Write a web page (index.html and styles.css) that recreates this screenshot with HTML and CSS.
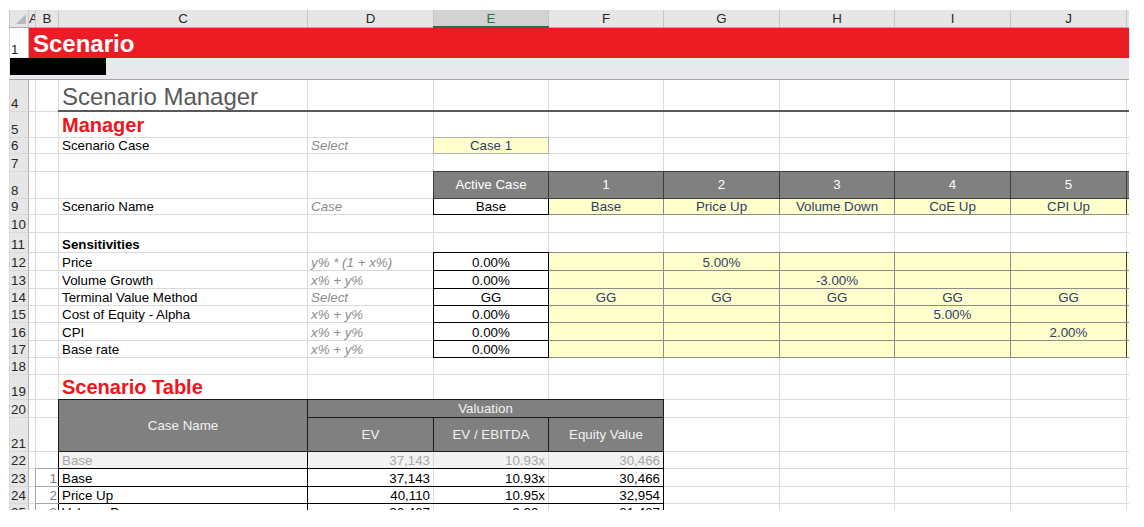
FILE: index.html
```html
<!DOCTYPE html>
<html>
<head>
<meta charset="utf-8">
<title>Scenario Manager</title>
<link rel="stylesheet" href="styles.css">
</head>
<body>
<div class="sheet">
<table class="grid">
<colgroup>
<col class="w-rh"><col class="w-a"><col class="w-b"><col class="w-c"><col class="w-d"><col class="w-e"><col class="w-f"><col class="w-g"><col class="w-h"><col class="w-i"><col class="w-j"><col class="w-k">
</colgroup>
<tbody>
<tr class="h17"><th class="ch corner"><span class="tri"></span></th><th class="ch">A</th><th class="ch">B</th><th class="ch">C</th><th class="ch">D</th><th class="ch sel">E</th><th class="ch">F</th><th class="ch">G</th><th class="ch">H</th><th class="ch">I</th><th class="ch">J</th><th class="ch"></th></tr>
<tr class="h30"><td class="rh plain">1</td><td class="banner" colspan="11">Scenario</td></tr>
<tr class="h22"><td class="band" colspan="12"><div class="redact"></div></td></tr>
<tr class="h32"><td class="rh">4</td><td></td><td></td><td class="rule title">Scenario Manager</td><td class="rule"></td><td class="rule"></td><td class="rule"></td><td class="rule"></td><td class="rule"></td><td class="rule"></td><td class="rule"></td><td class="rule"></td></tr>
<tr class="h26"><td class="rh">5</td><td></td><td></td><td class="sect">Manager</td><td></td><td></td><td></td><td></td><td></td><td></td><td></td><td></td></tr>
<tr class="h16"><td class="rh">6</td><td></td><td></td><td>Scenario Case</td><td class="hint">Select</td><td class="inp case">Case 1</td><td></td><td></td><td></td><td></td><td></td><td></td></tr>
<tr class="h18"><td class="rh">7</td><td></td><td></td><td></td><td></td><td></td><td></td><td></td><td></td><td></td><td></td><td></td></tr>
<tr class="h27"><td class="rh">8</td><td></td><td></td><td></td><td></td><td class="hd">Active Case</td><td class="hd">1</td><td class="hd">2</td><td class="hd">3</td><td class="hd">4</td><td class="hd">5</td><td class="hd"></td></tr>
<tr class="h16"><td class="rh">9</td><td></td><td></td><td>Scenario Name</td><td class="hint">Case</td><td class="act">Base</td><td class="inp">Base</td><td class="inp">Price Up</td><td class="inp">Volume Down</td><td class="inp">CoE Up</td><td class="inp edge">CPI Up</td><td class="inp"></td></tr>
<tr class="h18"><td class="rh">10</td><td></td><td></td><td></td><td></td><td></td><td></td><td></td><td></td><td></td><td></td><td></td></tr>
<tr class="h20"><td class="rh">11</td><td></td><td></td><td class="bold">Sensitivities</td><td></td><td></td><td></td><td></td><td></td><td></td><td></td><td></td></tr>
<tr class="h18"><td class="rh">12</td><td></td><td></td><td>Price</td><td class="hint">y% * (1 + x%)</td><td class="act">0.00%</td><td class="inp"></td><td class="inp">5.00%</td><td class="inp"></td><td class="inp"></td><td class="inp edge"></td><td class="inp"></td></tr>
<tr class="h18"><td class="rh">13</td><td></td><td></td><td>Volume Growth</td><td class="hint">x% + y%</td><td class="act">0.00%</td><td class="inp"></td><td class="inp"></td><td class="inp">-3.00%</td><td class="inp"></td><td class="inp edge"></td><td class="inp"></td></tr>
<tr class="h17"><td class="rh">14</td><td></td><td></td><td>Terminal Value Method</td><td class="hint">Select</td><td class="act">GG</td><td class="inp">GG</td><td class="inp">GG</td><td class="inp">GG</td><td class="inp">GG</td><td class="inp edge">GG</td><td class="inp"></td></tr>
<tr class="h17"><td class="rh">15</td><td></td><td></td><td>Cost of Equity - Alpha</td><td class="hint">x% + y%</td><td class="act">0.00%</td><td class="inp"></td><td class="inp"></td><td class="inp"></td><td class="inp">5.00%</td><td class="inp edge"></td><td class="inp"></td></tr>
<tr class="h18"><td class="rh">16</td><td></td><td></td><td>CPI</td><td class="hint">x% + y%</td><td class="act">0.00%</td><td class="inp"></td><td class="inp"></td><td class="inp"></td><td class="inp"></td><td class="inp edge">2.00%</td><td class="inp"></td></tr>
<tr class="h17"><td class="rh">17</td><td></td><td></td><td>Base rate</td><td class="hint">x% + y%</td><td class="act">0.00%</td><td class="inp"></td><td class="inp"></td><td class="inp"></td><td class="inp"></td><td class="inp edge"></td><td class="inp"></td></tr>
<tr class="h17"><td class="rh">18</td><td></td><td></td><td></td><td></td><td></td><td></td><td></td><td></td><td></td><td></td><td></td></tr>
<tr class="h25"><td class="rh">19</td><td></td><td></td><td class="sect">Scenario Table</td><td></td><td></td><td></td><td></td><td></td><td></td><td></td><td></td></tr>
<tr class="h18"><td class="rh">20</td><td></td><td></td><td class="th2" rowspan="2">Case Name</td><td class="th2" colspan="3">Valuation</td><td></td><td></td><td></td><td></td><td></td></tr>
<tr class="h34"><td class="rh">21</td><td></td><td></td><td class="th2">EV</td><td class="th2">EV / EBITDA</td><td class="th2">Equity Value</td><td></td><td></td><td></td><td></td><td></td></tr>
<tr class="h17"><td class="rh">22</td><td></td><td></td><td class="ghost tl tr2 tb">Base</td><td class="ghost num tb">37,143</td><td class="ghost num tb">10.93x</td><td class="ghost num tb tr2">30,466</td><td></td><td></td><td></td><td></td><td></td></tr>
<tr class="h18"><td class="rh">23</td><td></td><td class="idx">1</td><td class="tl tr2 tb">Base</td><td class="num tb">37,143</td><td class="num tb">10.93x</td><td class="num tb tr2">30,466</td><td></td><td></td><td></td><td></td><td></td></tr>
<tr class="h17"><td class="rh">24</td><td></td><td class="idx">2</td><td class="tl tr2 tb">Price Up</td><td class="num tb">40,110</td><td class="num tb">10.95x</td><td class="num tb tr2">32,954</td><td></td><td></td><td></td><td></td><td></td></tr>
<tr class="h17"><td class="rh">25</td><td></td><td class="idx">3</td><td class="tl tr2 tb">Volume Down</td><td class="num tb">36,487</td><td class="num tb">9.92x</td><td class="num tb tr2">31,487</td><td></td><td></td><td></td><td></td><td></td></tr>
</tbody>
</table>
</div>
</body>
</html>
```

FILE: styles.css
```css
body {
  margin: 0;
  background: #fff;
  font-family: "Liberation Sans", Arial, sans-serif;
  font-size: 13.33px;
  color: #000;
}

.sheet {
  margin: 10px 0 0 9px;
  width: 1120px;
  height: 500px;
  overflow: hidden;
}

.grid {
  border-collapse: collapse;
  table-layout: fixed;
  width: 1120px;
}

.grid col {
  border-left: 1px solid #dadada;
  border-right: 1px solid #dadada;
}

.grid tr {
  border-bottom: 1px solid #dadada;
}

.w-rh { width: 19px; }
.w-a { width: 7px; }
.w-b { width: 23px; }
.w-c { width: 249px; }
.w-d { width: 126px; }
.w-e { width: 115px; }
.w-f { width: 115px; }
.w-g { width: 116px; }
.w-h { width: 115px; }
.w-i { width: 116px; }
.w-j { width: 116px; }
.w-k { width: 3px; }

.h16 { height: 16px; }
.h17 { height: 17px; }
.h18 { height: 18px; }
.h20 { height: 20px; }
.h22 { height: 22px; }
.h25 { height: 25px; }
.h26 { height: 26px; }
.h27 { height: 27px; }
.h30 { height: 30px; }
.h32 { height: 32px; }
.h34 { height: 34px; }

.grid td,
.grid th {
  padding: 0 3px;
  line-height: 15px;
  vertical-align: bottom;
  white-space: nowrap;
  overflow: hidden;
  font-weight: normal;
}

.grid .ch {
  background: #e6e6e6;
  color: #262626;
  text-align: center;
  vertical-align: middle;
  padding: 0;
  border-left: 1px solid #c6c6c6;
  border-right: 1px solid #c6c6c6;
  border-bottom: 1px solid #ababab;
}

.grid .ch.sel {
  background: #d2d2d2;
  color: #217346;
  border-bottom: 2px solid #217346;
}

.grid .corner {
  vertical-align: bottom;
  padding: 0 2px 3px 0;
}

.tri {
  display: block;
  width: 0;
  height: 0;
  margin-left: auto;
  border-left: 10px solid transparent;
  border-bottom: 10px solid #b9b9b9;
}

.grid .rh {
  background: #e6e6e6;
  color: #262626;
  padding: 0 0 0 1px;
  border-right: 1px solid #b4b4b4;
}

.grid .rh.plain {
  background: #fff;
}

.grid .banner {
  background: #ed1c24;
  color: #fff;
  font-weight: bold;
  font-size: 24px;
  line-height: 27px;
  padding-left: 4px;
  border: 1px solid #ed1c24;
}

.grid .band {
  background: #e7e9ec;
  position: relative;
  padding: 0;
  border: 1px solid #e7e9ec;
  border-bottom-color: #a6a6a6;
}

.redact {
  position: absolute;
  left: 0;
  top: 0;
  width: 96px;
  height: 17px;
  background: #000;
}

.grid .rule {
  border-bottom: 2px solid #595959;
}

.grid .title {
  font-size: 24px;
  line-height: 27px;
  color: #595959;
  padding-left: 3px;
}

.grid .sect {
  font-size: 20px;
  line-height: 23px;
  font-weight: bold;
  color: #f0141e;
}

.grid .bold {
  font-weight: bold;
}

.grid .hint {
  font-style: italic;
  color: #8c8c8c;
}

.grid .inp {
  background: #ffffcc;
  color: #2f3d69;
  text-align: center;
  border: 1px solid #8c8c8c;
}

.grid .inp.case {
  border-color: #b2b2b2;
}

.grid .inp.edge {
  border-right-color: #3c3c3c;
}

.grid .act {
  background: #fff;
  text-align: center;
  border: 1px solid #000;
}

.grid .hd {
  background: #808080;
  color: #fff;
  text-align: center;
  vertical-align: middle;
  border: 1px solid #3c3c3c;
}

.grid .th2 {
  background: #808080;
  color: #f2f2f2;
  text-align: center;
  vertical-align: middle;
  border: 1px solid #1a1a1a;
}

.grid .num {
  text-align: right;
}

.grid .ghost {
  background: #f2f2f2;
  color: #a6a6a6;
}

.grid .tl { border-left: 1px solid #000; }
.grid .tr2 { border-right: 1px solid #000; }
.grid .tb { border-bottom: 1px solid #000; }

.grid .idx {
  text-align: right;
  color: #808080;
  padding: 0 1px 0 0;
  border-left: 1px solid #a6a6a6;
  border-top: 1px solid #a6a6a6;
  border-bottom: 1px solid #a6a6a6;
}
```
